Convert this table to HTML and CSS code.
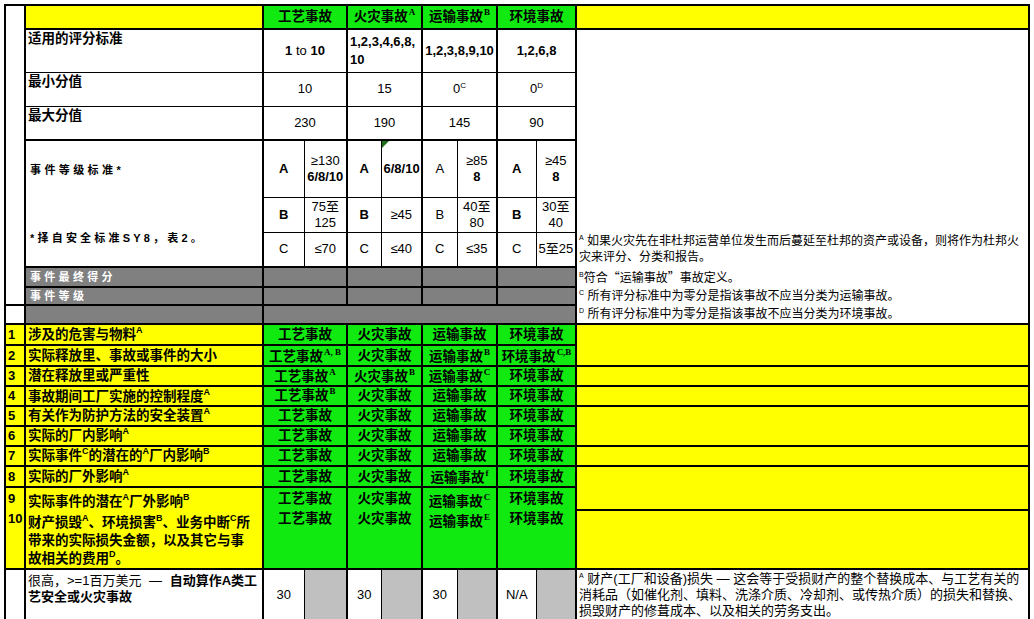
FILE: index.html
```html
<!DOCTYPE html>
<html lang="zh-CN">
<head>
<meta charset="utf-8">
<title>事件评分表</title>
<link rel="stylesheet" href="styles.css">
</head>
<body>
<table class="sheet">
<colgroup>
<col class="c-num"><col class="c-label">
<col class="c-s1"><col class="c-s2"><col class="c-s3"><col class="c-s4">
<col class="c-s5"><col class="c-s6"><col class="c-s7"><col class="c-s8">
<col class="c-note">
</colgroup>
<tbody>
<tr class="r0">
<td class="blank" rowspan="9"></td>
<td class="y"></td>
<td class="g hd" colspan="2">工艺事故</td>
<td class="g hd" colspan="2">火灾事故<sup class="ss">A</sup></td>
<td class="g hd" colspan="2">运输事故<sup class="ss">B</sup></td>
<td class="g hd" colspan="2">环境事故</td>
<td class="y"></td>
</tr>
<tr class="r1 thin-b">
<td class="lbl top">适用的评分标准</td>
<td class="val b" colspan="2">1 <span class="n">to</span> 10</td>
<td class="val b left" colspan="2">1,2,3,4,6,8,<br>10</td>
<td class="val b" colspan="2">1,2,3,8,9,10</td>
<td class="val b" colspan="2">1,2,6,8</td>
<td class="nw" rowspan="5"></td>
</tr>
<tr class="r2 thin-t thin-b">
<td class="lbl top">最小分值</td>
<td class="val" colspan="2">10</td>
<td class="val" colspan="2">15</td>
<td class="val" colspan="2">0<sup class="sa">C</sup></td>
<td class="val" colspan="2">0<sup class="sa">D</sup></td>
</tr>
<tr class="r3 thin-t">
<td class="lbl top">最大分值</td>
<td class="val" colspan="2">230</td>
<td class="val" colspan="2">190</td>
<td class="val" colspan="2">145</td>
<td class="val" colspan="2">90</td>
</tr>
<tr class="r4 thin-b">
<td class="grade" rowspan="3"><div class="g-title">事件等级标准*</div><div class="g-note">*择自安全标准SY8，表2。</div></td>
<td class="gr ga b">A</td><td class="gr gb">≥130<br><b>6/8/10</b></td>
<td class="gr ga b">A</td><td class="gr gb cmt b">6/8/10</td>
<td class="gr ga">A</td><td class="gr gb">≥85<br><b>8</b></td>
<td class="gr ga b">A</td><td class="gr gb">≥45<br><b>8</b></td>
</tr>
<tr class="r5 thin-t thin-b">
<td class="gr ga b">B</td><td class="gr gb">75至<br>125</td>
<td class="gr ga b">B</td><td class="gr gb">≥45</td>
<td class="gr ga">B</td><td class="gr gb">40至<br>80</td>
<td class="gr ga b">B</td><td class="gr gb">30至<br>40</td>
</tr>
<tr class="r6 thin-t">
<td class="gr ga">C</td><td class="gr gb">≤70</td>
<td class="gr ga">C</td><td class="gr gb">≤40</td>
<td class="gr ga">C</td><td class="gr gb">≤35</td>
<td class="gr ga">C</td><td class="gr gb">5至25</td>
<td class="nw fn bottom"><sup class="fs">A</sup> 如果火灾先在非杜邦运营单位发生而后蔓延至杜邦的资产或设备，则将作为杜邦火<br>灾来评分、分类和报告。</td>
</tr>
<tr class="r7">
<td class="dg">事件最终得分</td>
<td class="dg" colspan="2"></td>
<td class="dg" colspan="2"></td>
<td class="dg" colspan="2"></td>
<td class="dg" colspan="2"></td>
<td class="nw fn"><sup class="fs">B</sup>符合<span class="cjk">“</span>运输事故<span class="cjk">”</span>事故定义。</td>
</tr>
<tr class="r8">
<td class="dg">事件等级</td>
<td class="dg" colspan="2"></td>
<td class="dg" colspan="2"></td>
<td class="dg" colspan="2"></td>
<td class="dg" colspan="2"></td>
<td class="nw fn"><sup class="fs">C</sup> 所有评分标准中为零分是指该事故不应当分类为运输事故。</td>
</tr>
<tr class="r9">
<td class="blank"></td>
<td class="dg"></td>
<td class="dg" colspan="8"></td>
<td class="nw fn"><sup class="fs">D</sup> 所有评分标准中为零分是指该事故不应当分类为环境事故。</td>
</tr>
<tr class="r10">
<td class="y num">1</td>
<td class="y lbl">涉及的危害与物料<sup class="sl">A</sup></td>
<td class="g ev" colspan="2">工艺事故</td>
<td class="g ev" colspan="2">火灾事故</td>
<td class="g ev" colspan="2">运输事故</td>
<td class="g ev" colspan="2">环境事故</td>
<td class="y" rowspan="2"></td>
</tr>
<tr class="r11">
<td class="y num">2</td>
<td class="y lbl">实际释放里、事故或事件的大小</td>
<td class="g ev bottom" colspan="2">工艺事故<sup class="ss">A, B</sup></td>
<td class="g ev" colspan="2">火灾事故</td>
<td class="g ev bottom" colspan="2">运输事故<sup class="ss">B</sup></td>
<td class="g ev bottom" colspan="2">环境事故<sup class="ss">C,B</sup></td>
</tr>
<tr class="r12">
<td class="y num">3</td>
<td class="y lbl">潜在释放里或严重性</td>
<td class="g ev bottom" colspan="2">工艺事故<sup class="ss">A</sup></td>
<td class="g ev bottom" colspan="2">火灾事故<sup class="ss">B</sup></td>
<td class="g ev bottom" colspan="2">运输事故<sup class="ss">C</sup></td>
<td class="g ev" colspan="2">环境事故</td>
<td class="y"></td>
</tr>
<tr class="r13">
<td class="y num">4</td>
<td class="y lbl bottom">事故期间工厂实施的控制程度<sup class="sl">A</sup></td>
<td class="g ev" colspan="2">工艺事故<sup class="ss">B</sup></td>
<td class="g ev" colspan="2">火灾事故</td>
<td class="g ev" colspan="2">运输事故</td>
<td class="g ev" colspan="2">环境事故</td>
<td class="y"></td>
</tr>
<tr class="r14">
<td class="y num">5</td>
<td class="y lbl">有关作为防护方法的安全装置<sup class="sl">A</sup></td>
<td class="g ev" colspan="2">工艺事故</td>
<td class="g ev" colspan="2">火灾事故</td>
<td class="g ev" colspan="2">运输事故</td>
<td class="g ev" colspan="2">环境事故</td>
<td class="y" rowspan="2"></td>
</tr>
<tr class="r15">
<td class="y num">6</td>
<td class="y lbl">实际的厂内影响<sup class="sl">A</sup></td>
<td class="g ev" colspan="2">工艺事故</td>
<td class="g ev" colspan="2">火灾事故</td>
<td class="g ev" colspan="2">运输事故</td>
<td class="g ev" colspan="2">环境事故</td>
</tr>
<tr class="r16">
<td class="y num">7</td>
<td class="y lbl">实际事件<sup class="sl">C</sup>的潜在的<sup class="sl">A</sup>厂内影响<sup class="sl">B</sup></td>
<td class="g ev" colspan="2">工艺事故</td>
<td class="g ev" colspan="2">火灾事故</td>
<td class="g ev" colspan="2">运输事故</td>
<td class="g ev" colspan="2">环境事故</td>
<td class="y"></td>
</tr>
<tr class="r17">
<td class="y num">8</td>
<td class="y lbl">实际的厂外影响<sup class="sl">A</sup></td>
<td class="g ev" colspan="2">工艺事故</td>
<td class="g ev" colspan="2">火灾事故</td>
<td class="g ev bottom" colspan="2">运输事故<sup class="ss">f</sup></td>
<td class="g ev" colspan="2">环境事故</td>
<td class="y" rowspan="2"></td>
</tr>
<tr class="r18">
<td class="y num top multi" rowspan="2">9<br>10</td>
<td class="y lbl top multi" rowspan="2"><div class="first">实际事件的潜在<sup class="sl">A</sup>厂外影响<sup class="sl">B</sup></div><div class="rest">财产损毁<sup class="sl">A</sup>、环境损害<sup class="sl">B</sup>、业务中断<sup class="sl">C</sup>所<br>带来的实际损失金额，以及其它与事<br>故相关的费用<sup class="sl">D</sup>。</div></td>
<td class="g ev top multi" colspan="2" rowspan="2">工艺事故<br>工艺事故</td>
<td class="g ev top multi" colspan="2" rowspan="2">火灾事故<br>火灾事故</td>
<td class="g ev top multi low" colspan="2" rowspan="2">运输事故<sup class="ss">C</sup><br>运输事故<sup class="ss">E</sup></td>
<td class="g ev top multi" colspan="2" rowspan="2">环境事故<br>环境事故</td>
</tr>
<tr class="r19">
<td class="y"></td>
</tr>
<tr class="r20">
<td class="blank"></td>
<td class="lbl top wl">很高，&gt;=1百万美元 <span class="dash">—</span> <b>自动算作A类工<br>艺安全或火灾事故</b></td>
<td class="val ga">30</td><td class="lg gb"></td>
<td class="val ga">30</td><td class="lg gb"></td>
<td class="val ga">30</td><td class="lg gb"></td>
<td class="val ga">N/A</td><td class="lg gb"></td>
<td class="fn2 top"><sup class="fs">A</sup> 财产(工厂和设备)损失 — 这会等于受损财产的整个替换成本、与工艺有关的<br>消耗品（如催化剂、填料、洗涤介质、冷却剂、或传热介质）的损失和替换、<br>损毁财产的修葺成本、以及相关的劳务支出。</td>
</tr>
<tr class="r21">
<td class="blank"></td>
<td class="lbl"></td>
<td class="val ga"></td><td class="lg gb"></td>
<td class="val ga"></td><td class="lg gb"></td>
<td class="val ga"></td><td class="lg gb"></td>
<td class="val ga"></td><td class="lg gb"></td>
<td class="fn2"></td>
</tr>
</tbody>
</table>
</body>
</html>
```

FILE: styles.css
```css
html, body {
  margin: 0;
  padding: 0;
  overflow: hidden;
  background: #fff;
}

body {
  padding: 4px 0 0 4px;
}

.sheet {
  border-collapse: collapse;
  table-layout: fixed;
  width: 1025px;
  font-family: "Liberation Sans", "Noto Sans CJK SC", sans-serif;
  font-size: 13px;
  color: #000;
}

.c-num { width: 20px; }
.c-label { width: 238px; }
.c-s1 { width: 41px; }
.c-s2 { width: 43px; }
.c-s3 { width: 34px; }
.c-s4 { width: 41px; }
.c-s5 { width: 35px; }
.c-s6 { width: 40px; }
.c-s7 { width: 39px; }
.c-s8 { width: 40px; }
.c-note { width: 453px; }

.sheet td {
  border: 2px solid #000;
  padding: 0 2px;
  vertical-align: middle;
  line-height: 16px;
  overflow: hidden;
  white-space: nowrap;
  background: #fff;
}

/* row heights */
.r0 { height: 24px; }
.r1 { height: 43px; }
.r2, .r3 { height: 34px; }
.r4 { height: 57px; }
.r5, .r6 { height: 35px; }
.r7 { height: 20px; }
.r8 { height: 18px; }
.r9 { height: 19px; }
.r10, .r11 { height: 21px; }
.r12, .r13, .r14, .r15, .r16 { height: 20px; }
.r17 { height: 21px; }
.r18 { height: 22px; }
.r19 { height: 56px; }
.r20 { height: 51px; }
.r21 { height: 30px; }

/* thin inner lines */
.thin-b td { border-bottom-width: 1px; }
.thin-t td { border-top-width: 1px; }
.sheet td.ga { border-right-width: 1px; }
.sheet td.gb { border-left-width: 1px; }

/* right column notes without inner borders */
.sheet td.nw {
  border-top: none;
  border-bottom: none;
}

/* fills */
.sheet td.y { background: #ffff00; }
.sheet td.g { background: #10ea10; }
.sheet td.dg {
  background: #808080;
  color: #fff;
  font-weight: bold;
  font-size: 11px;
  letter-spacing: 3.3px;
  padding-left: 4px;
}
.sheet td.lg { background: #c0c0c0; }

/* alignment helpers */
.sheet td.top { vertical-align: top; }
.sheet td.bottom { vertical-align: bottom; }
.left { text-align: left; }
.b { font-weight: bold; }
.n { font-weight: normal; }
.cjk { font-family: "Noto Sans CJK SC", sans-serif; }

/* header */
.hd {
  text-align: center;
  font-weight: bold;
  font-size: 13.5px;
}

/* labels */
.lbl {
  font-weight: bold;
  font-size: 13.5px;
  text-align: left;
}
.sheet td.lbl.top { padding-top: 1px; }

.val {
  text-align: center;
  font-size: 13px;
}
.val.left { text-align: left; line-height: 18px; }

/* grade block */
.sheet td.grade {
  vertical-align: top;
  font-weight: bold;
  font-size: 11px;
  letter-spacing: 3.4px;
  padding-left: 4px;
}
.g-title {
  padding-top: 21px;
  line-height: 16px;
}
.g-note {
  padding-top: 52px;
  line-height: 16px;
  letter-spacing: 3.2px;
}

.gr {
  text-align: center;
  font-size: 13px;
  line-height: 17px;
}

.cmt { position: relative; }
.cmt::before {
  content: "";
  position: absolute;
  left: 0;
  top: 0;
  border-top: 7px solid #1d6d1d;
  border-right: 7px solid transparent;
}

/* event cells */
.ev {
  text-align: center;
  font-weight: bold;
  font-size: 13.5px;
}
.sheet td.multi { line-height: 20px; padding-top: 1px; }
.sheet td.low { padding-top: 4px; }

.num {
  font-weight: bold;
  font-size: 13px;
  text-align: left;
}

.first { line-height: 21px; padding-top: 2px; }
.rest { line-height: 18px; padding-top: 2px; }

/* superscripts */
sup {
  line-height: 0;
  vertical-align: 0;
  position: relative;
}
.ss {
  font-family: "Liberation Serif", serif;
  font-weight: bold;
  font-size: 9px;
  top: -6px;
  margin-left: 1px;
}
.sl {
  font-family: "Liberation Sans", sans-serif;
  font-weight: bold;
  font-size: 9px;
  top: -6px;
}
.sa {
  font-size: 8px;
  top: -5px;
}
.fs {
  font-size: 7px;
  top: -5px;
}

/* footnotes */
.fn {
  font-size: 12px;
  font-weight: normal;
  line-height: 16px;
  text-align: left;
}
.sheet td.fn.bottom { vertical-align: bottom; padding-bottom: 2px; }

.fn2 {
  font-size: 13px;
  line-height: 15.5px;
  text-align: left;
}
.sheet td.fn2.top { padding-top: 1px; }

.wl {
  font-weight: normal;
  font-size: 13px;
  line-height: 14px;
}
.sheet td.wl.top { padding-top: 3px; }
.dash { padding: 0 4px; }
```
